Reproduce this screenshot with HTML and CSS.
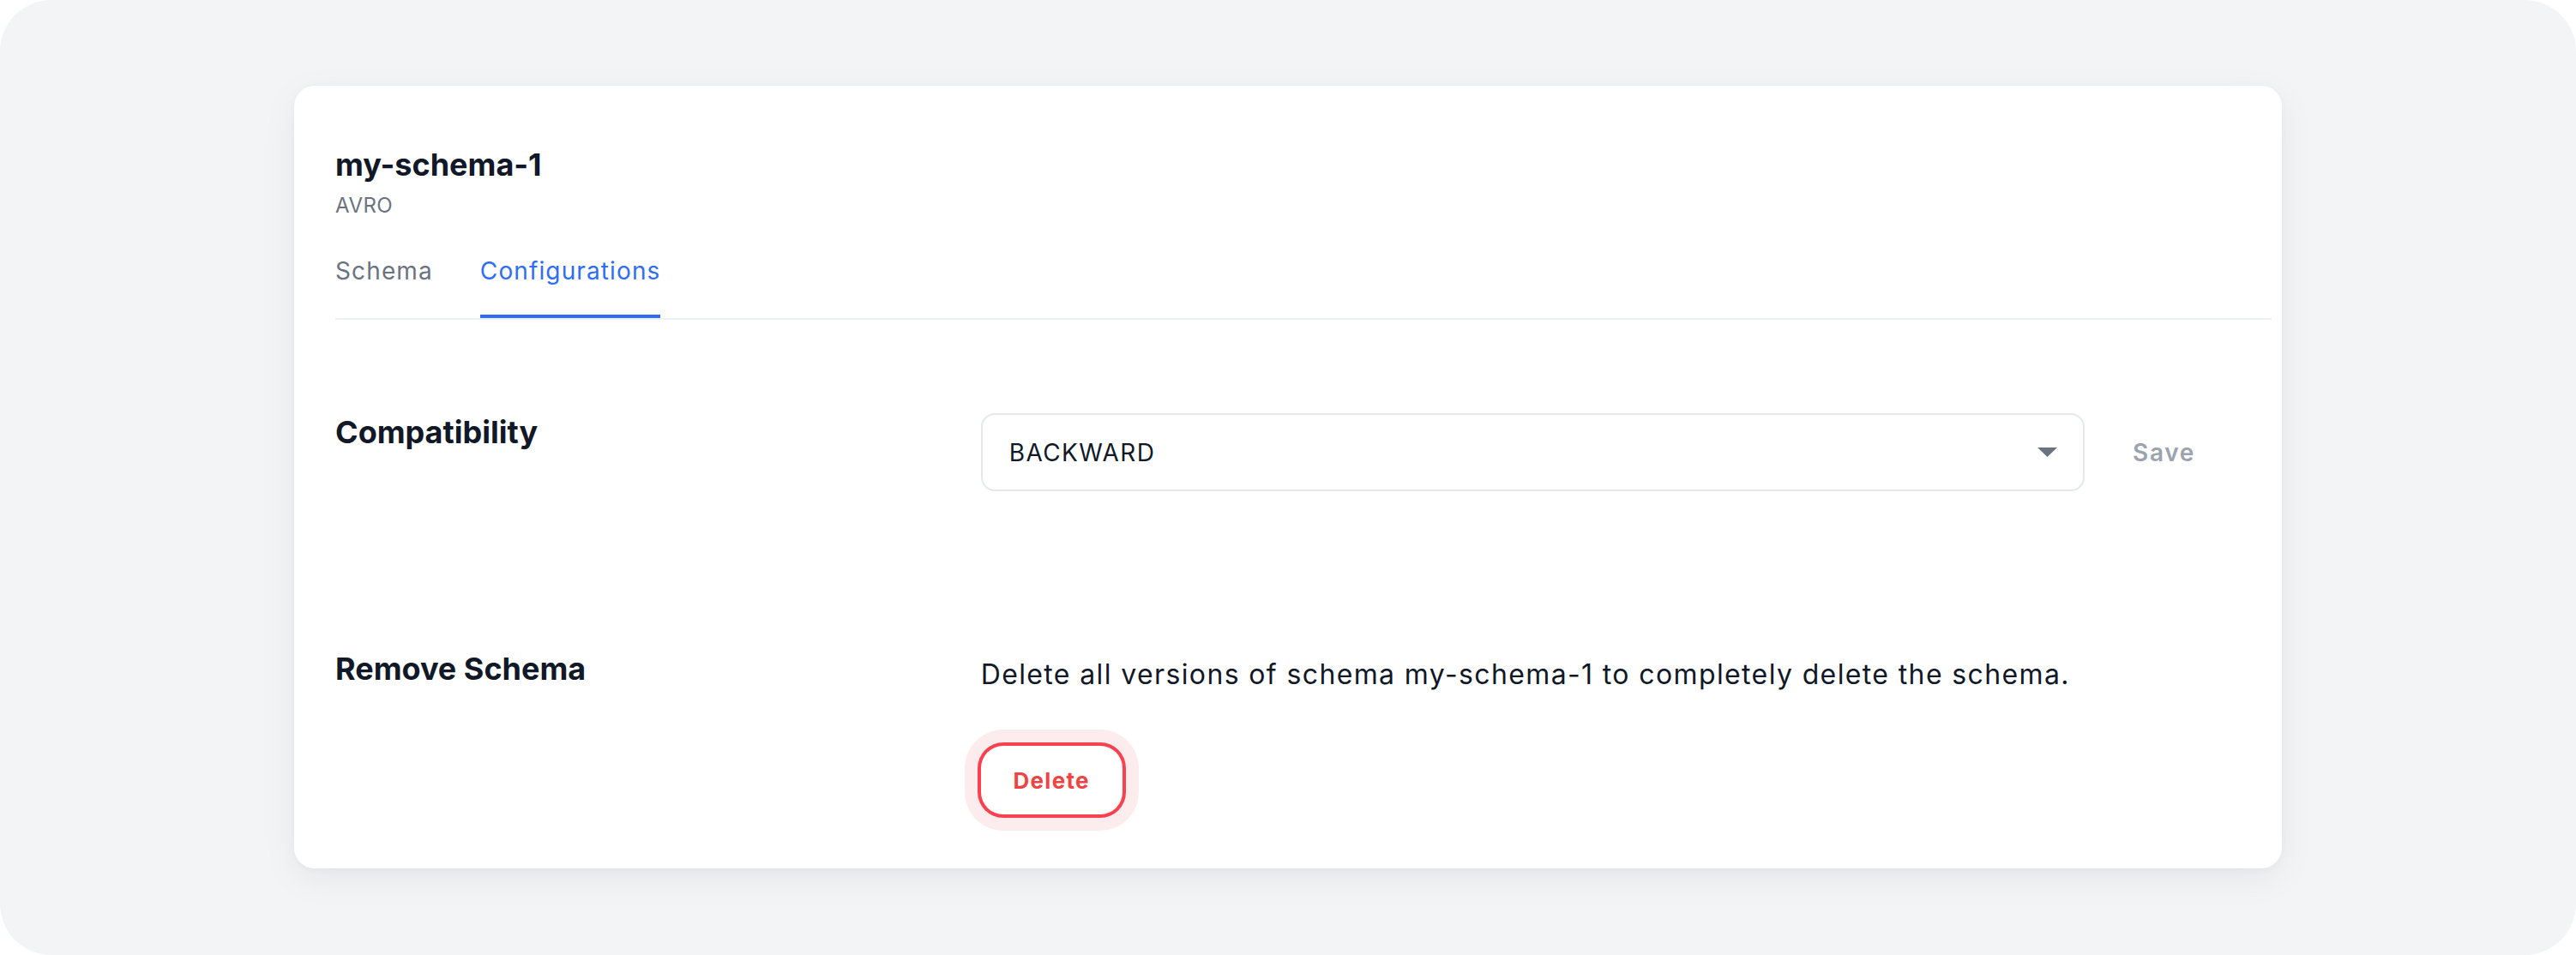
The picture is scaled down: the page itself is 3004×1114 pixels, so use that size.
FILE: index.html
```html
<!DOCTYPE html>
<html lang="en">
<head>
<meta charset="utf-8">
<title>my-schema-1 — Configurations</title>
<link rel="stylesheet" href="styles.css">
</head>
<body>
<div class="screen">
  <main class="card">
    <header class="head">
      <h1 class="title">my-schema-1</h1>
      <div class="subtitle">AVRO</div>
    </header>
    <nav class="tabs">
      <span class="tab">Schema</span>
      <span class="tab tab-active">Configurations</span>
    </nav>
    <section class="row row-compat">
      <h2 class="label">Compatibility</h2>
      <div class="value value-compat">
        <div class="select">
          <span class="select-text">BACKWARD</span>
          <svg class="caret" viewBox="0 0 23 11" width="23" height="11" aria-hidden="true"><path d="M0 0 H23 L11.5 11 Z" fill="#6b7280"/></svg>
        </div>
        <button class="save" type="button">Save</button>
      </div>
    </section>
    <section class="row row-remove">
      <h2 class="label">Remove Schema</h2>
      <div class="value value-remove">
        <p class="desc">Delete all versions of schema my-schema-1 to completely delete the schema.</p>
        <button class="delete" type="button">Delete</button>
      </div>
    </section>
  </main>
</div>
</body>
</html>
```
FILE: styles.css
```css
html, body {
  margin: 0;
  padding: 0;
  background: #ffffff;
}
body {
  font-family: Inter, "Noto Sans", "Liberation Sans", sans-serif;
  color: #111827;
}
.screen {
  height: 1114px;
  background: #f3f4f6;
  border-radius: 60px;
  overflow: hidden;
  padding-top: 100px;
  box-sizing: border-box;
}
.card {
  width: 2318px;
  height: 913px;
  margin: 0 auto;
  box-sizing: border-box;
  background: #ffffff;
  border-radius: 24px;
  padding: 64px 12px 0 48px;
  box-shadow: 0 12px 44px rgba(17, 24, 39, 0.06), 0 2px 8px rgba(17, 24, 39, 0.03);
}
.head {
  display: flex;
  flex-direction: column;
}
.title {
  margin: 0;
  font-size: 36px;
  line-height: 56px;
  font-weight: 700;
  color: #111827;
}
.subtitle {
  margin-top: 4px;
  font-size: 24px;
  line-height: 32px;
  letter-spacing: 0.02em;
  color: #6b7280;
}
.tabs {
  margin-top: 40px;
  display: flex;
  gap: 55px;
  border-bottom: 2px solid #eef1f5;
}
.tab {
  font-size: 28px;
  line-height: 40px;
  letter-spacing: 0.04em;
  color: #6b7280;
  padding-bottom: 31px;
  border-bottom: 4px solid transparent;
}
.tab-active {
  color: #2f6df6;
  border-bottom-color: #2f6df6;
}
.row {
  display: grid;
  grid-template-columns: 1fr 2fr;
  align-items: start;
}
.row-compat {
  margin-top: 103px;
}
.row-remove {
  margin-top: 179px;
}
.label {
  margin: 0;
  font-size: 36px;
  line-height: 56px;
  font-weight: 700;
  color: #111827;
}
.value-compat {
  display: flex;
  align-items: center;
  padding-top: 6px;
  padding-right: 59px;
}
.select {
  flex: 1;
  height: 91px;
  box-sizing: border-box;
  border: 2px solid #e5e7eb;
  border-radius: 16px;
  display: flex;
  align-items: center;
  justify-content: space-between;
  padding: 0 30px 0 31px;
}
.select-text {
  font-size: 28px;
  line-height: 40px;
  letter-spacing: 0.05em;
  color: #111827;
}
.caret {
  display: block;
}
.save {
  margin-left: 24px;
  padding: 0 30px 0 32px;
  height: 91px;
  border: 0;
  background: transparent;
  font-family: inherit;
  font-size: 28px;
  font-weight: 600;
  letter-spacing: 0.06em;
  color: #9ca3af;
}
.value-remove {
  display: flex;
  flex-direction: column;
  align-items: flex-start;
  padding-top: 11px;
}
.desc {
  margin: 0;
  font-size: 32px;
  line-height: 48px;
  letter-spacing: 0.043em;
  color: #111827;
}
.delete {
  margin-top: 59px;
  width: 165px;
  height: 80px;
  border: 0;
  border-radius: 26px;
  background: #ffffff;
  box-shadow: 0 0 0 4px #fb4150, 0 0 0 19px #fdecee;
  font-family: inherit;
  font-size: 26px;
  font-weight: 700;
  letter-spacing: 0.05em;
  color: #ef4444;
}
```
